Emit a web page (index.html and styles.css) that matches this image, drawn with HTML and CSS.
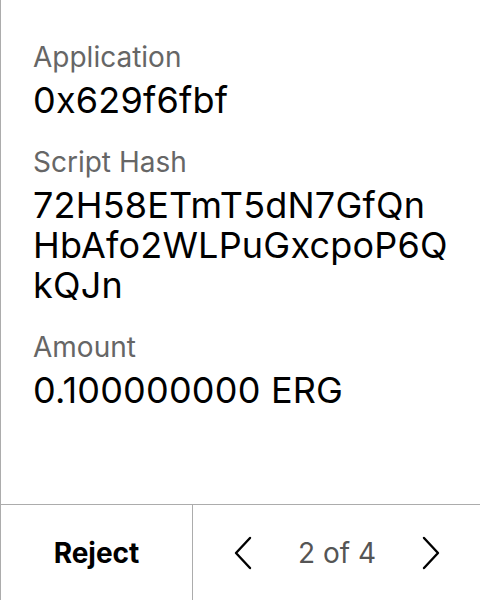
FILE: index.html
```html
<!DOCTYPE html>
<html>
<head>
<meta charset="utf-8">
<link rel="stylesheet" href="styles.css">
</head>
<body>
<div class="screen">
  <div class="content">
    <div class="field">
      <div class="label">Application</div>
      <div class="value">0x629f6fbf</div>
    </div>
    <div class="field">
      <div class="label">Script Hash</div>
      <div class="value">72H58ETmT5dN7GfQn<br>HbAfo2WLPuGxcpoP6Q<br>kQJn</div>
    </div>
    <div class="field">
      <div class="label">Amount</div>
      <div class="value">0.100000000 ERG</div>
    </div>
  </div>
  <div class="footer">
    <div class="reject">Reject</div>
    <div class="pager">
      <svg class="chev" width="20" height="34" viewBox="0 0 20 34"><path d="M17 2 L3 17 L17 32" fill="none" stroke="#000" stroke-width="2.4" stroke-linecap="round" stroke-linejoin="round"/></svg>
      <span class="count">2 of 4</span>
      <svg class="chev" width="20" height="34" viewBox="0 0 20 34"><path d="M3 2 L17 17 L3 32" fill="none" stroke="#000" stroke-width="2.4" stroke-linecap="round" stroke-linejoin="round"/></svg>
    </div>
  </div>
</div>
</body>
</html>
```

FILE: styles.css
```css
html, body {
  margin: 0;
  padding: 0;
  background: #fff;
}
.screen {
  width: 480px;
  height: 600px;
  box-sizing: border-box;
  border-left: 1px solid #acacac;
  display: flex;
  flex-direction: column;
  font-family: Inter, "Noto Sans", sans-serif;
}
.content {
  flex: 1;
  padding: 40px 0 0 32px;
  display: flex;
  flex-direction: column;
  gap: 25px;
}
.field {
  display: flex;
  flex-direction: column;
  gap: 6px;
}
.label {
  font-size: 28px;
  line-height: 34px;
  color: #666;
}
.value {
  font-size: 36px;
  line-height: 40px;
  color: #000;
  letter-spacing: 0.2px;
}
.footer {
  height: 96px;
  box-sizing: border-box;
  flex: none;
  border-top: 1px solid #acacac;
  display: flex;
}
.reject {
  width: 191px;
  border-right: 1px solid #acacac;
  display: flex;
  align-items: center;
  justify-content: center;
  font-size: 28px;
  font-weight: 700;
  color: #000;
}
.pager {
  flex: 1;
  display: flex;
  align-items: center;
  justify-content: space-between;
  padding: 0 39px 0 40px;
}
.count {
  font-size: 28px;
  color: #555;
}
```
